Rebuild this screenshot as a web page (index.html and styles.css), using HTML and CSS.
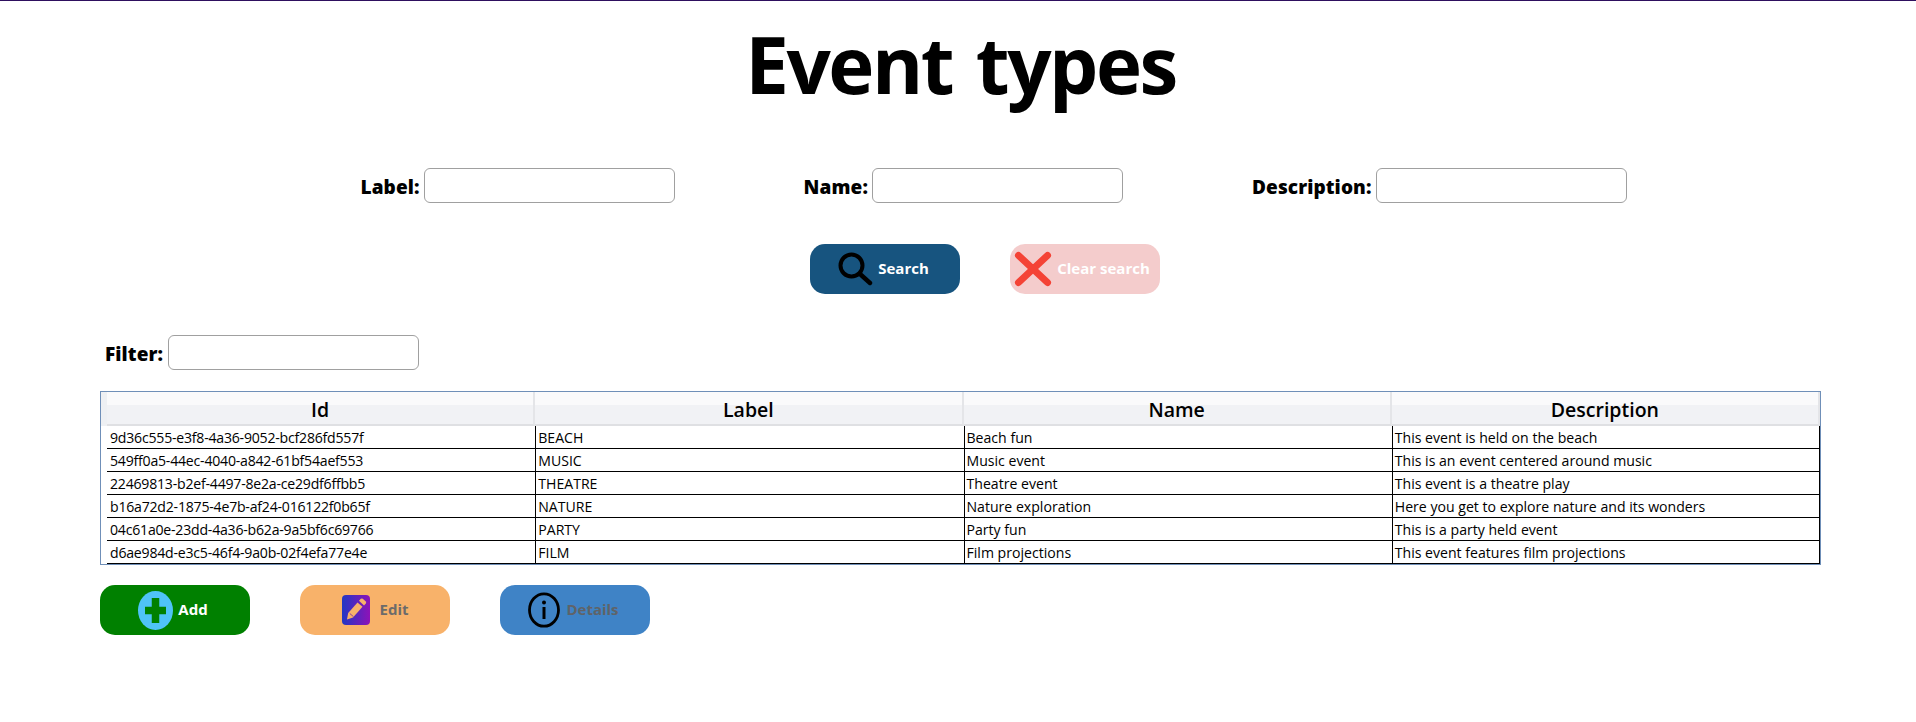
FILE: index.html
```html
<!DOCTYPE html>
<html lang="en">
<head>
    <meta charset="UTF-8">
    <meta name="viewport" content="width=device-width, initial-scale=1.0">
    <title>Event types</title>
    <link rel="stylesheet" href="styles.css">
</head>
<body>
    <h1 class="page-title">Event types</h1>

    <div class="search-row">
        <div class="field"><label for="label">Label:</label><input type="text" id="label"></div>
        <div class="field"><label for="name">Name:</label><input type="text" id="name"></div>
        <div class="field"><label for="description">Description:</label><input type="text" id="description"></div>
    </div>

    <div class="search-buttons">
        <button class="btn btn-search">
            <svg width="36" height="36" viewBox="0 0 36 36"><circle cx="14.5" cy="14.5" r="11" fill="none" stroke="#000" stroke-width="4"/><path d="M23 23l10 9" stroke="#000" stroke-width="4.4" stroke-linecap="round"/></svg>
            <span>Search</span>
        </button>
        <button class="btn btn-clear">
            <svg width="38" height="36" viewBox="0 0 38 36"><path d="M4.500 4.500L33.500 31.500M33.500 4.500L4.500 31.500" stroke="#f44336" stroke-width="7" stroke-linecap="round"/></svg>
            <span>Clear search</span>
        </button>
    </div>

    <div class="filter-row">
        <div class="field"><label for="filter">Filter:</label><input type="text" id="filter"></div>
    </div>

    <table class="grid">
        <thead>
            <tr><th>Id</th><th>Label</th><th>Name</th><th>Description</th></tr>
        </thead>
        <tbody>
            <tr><td class="uuid">9d36c555-e3f8-4a36-9052-bcf286fd557f</td><td>BEACH</td><td>Beach fun</td><td>This event is held on the beach</td></tr>
            <tr><td class="uuid">549ff0a5-44ec-4040-a842-61bf54aef553</td><td>MUSIC</td><td>Music event</td><td>This is an event centered around music</td></tr>
            <tr><td class="uuid">22469813-b2ef-4497-8e2a-ce29df6ffbb5</td><td>THEATRE</td><td>Theatre event</td><td>This event is a theatre play</td></tr>
            <tr><td class="uuid">b16a72d2-1875-4e7b-af24-016122f0b65f</td><td>NATURE</td><td>Nature exploration</td><td>Here you get to explore nature and its wonders</td></tr>
            <tr><td class="uuid">04c61a0e-23dd-4a36-b62a-9a5bf6c69766</td><td>PARTY</td><td>Party fun</td><td>This is a party held event</td></tr>
            <tr><td class="uuid">d6ae984d-e3c5-46f4-9a0b-02f4efa77e4e</td><td>FILM</td><td>Film projections</td><td>This event features film projections</td></tr>
        </tbody>
    </table>

    <div class="action-buttons">
        <button class="btn btn-add">
            <svg width="35" height="39" viewBox="0 0 35 39"><ellipse cx="17.500" cy="19.500" rx="17.500" ry="19.500" fill="#4fc3f7"/><path d="M17.500 7v25M7 19.500h21" stroke="#008000" stroke-width="7.500"/></svg>
            <span>Add</span>
        </button>
        <button class="btn btn-edit">
            <svg width="28" height="30" viewBox="0 0 28 30">
                <defs><linearGradient id="editBg" x1="0" y1="0" x2="1" y2="0"><stop offset="0" stop-color="#2238c4"/><stop offset="1" stop-color="#8e12b8"/></linearGradient></defs>
                <rect width="28" height="30" rx="4" fill="url(#editBg)"/>
                <path d="M5 24.500l1.200-6.500L15.500 7.500l5 4.300L11 22.500z" fill="#f8b26a"/>
                <path d="M17 5.800l1.800-2q1-.8 2 0l3 2.600q.8.900 0 2l-1.800 2z" fill="#f8b26a"/>
                <path d="M7.800 18.500l3.700 3.200" stroke="#8a3fa0" stroke-width="1"/>
            </svg>
            <span>Edit</span>
        </button>
        <button class="btn btn-details">
            <svg width="32" height="36" viewBox="0 0 32 36"><ellipse cx="16" cy="18" rx="14.500" ry="16.200" fill="none" stroke="#000" stroke-width="2.800"/><circle cx="16" cy="10.500" r="2" fill="#000"/><path d="M16 15v12" stroke="#000" stroke-width="3"/></svg>
            <span>Details</span>
        </button>
    </div>
</body>
</html>
```

FILE: styles.css
```css
body {
    margin: 0;
    border-top: 1px solid #2e0f5e;
    font-family: "Open Sans", "Noto Sans", sans-serif;
    color: black;
    background: white;
}
.page-title {
    margin: 0;
    padding: 9px 0 3px 5px;
    height: 108px;
    font-size: 78px;
    line-height: 108px;
    font-weight: 700;
    text-align: center;
    letter-spacing: -2.5px;
    word-spacing: 6px;
}
.search-row {
    display: flex;
    justify-content: center;
    gap: 129px;
    margin-top: 47px;
    padding-left: 71px;
}
.field {
    display: flex;
    align-items: center;
    gap: 4px;
}
.field label {
    padding-top: 2px;
    font-size: 19px;
    font-weight: 800;
    letter-spacing: 0.1px;
}
.field input {
    box-sizing: border-box;
    width: 251px;
    height: 35px;
    border: 1px solid #a0a0a0;
    border-radius: 6px;
    background: white;
}
.search-buttons {
    display: flex;
    justify-content: center;
    gap: 50px;
    margin-top: 41px;
    padding-left: 54px;
}
.btn {
    display: flex;
    align-items: center;
    justify-content: center;
    gap: 5px;
    box-sizing: border-box;
    width: 150px;
    height: 50px;
    padding: 0;
    border: none;
    border-radius: 15px;
    font-family: inherit;
    font-size: 15px;
    font-weight: 700;
}
.btn span {
    padding-bottom: 2px;
}
.btn-search {
    padding-right: 4px;
    background: #17547f;
    color: white;
}
.btn-clear {
    padding-right: 6px;
    background: #f4cccc;
    color: white;
}
.btn-add {
    padding-right: 4px;
    background: green;
    color: white;
}
.btn-edit {
    gap: 10px;
    background: #f8b26a;
    color: #6b6b6b;
}
.btn-details {
    gap: 6px;
    padding-right: 3px;
    background: #3f83c6;
    color: #5f6368;
}
.filter-row {
    margin-top: 41px;
    padding-left: 105px;
}
.filter-row .field {
    gap: 5px;
}
.grid {
    box-sizing: border-box;
    width: 1721px;
    margin: 21px 0 0 100px;
    border: 1px solid #6f8fb8;
    border-collapse: separate;
    border-spacing: 0;
    table-layout: fixed;
    padding-left: 6px;
    background: linear-gradient(#eef0f3, #eef0f3) left top / 6px 34px no-repeat;
}
.grid th {
    height: 34px;
    padding: 2px 0 0;
    box-sizing: border-box;
    font-size: 19.5px;
    font-weight: 600;
    background: linear-gradient(#fafafb 40%, #f1f2f5 40%);
    border-right: 2px solid #e4e5e8;
    border-bottom: 2px solid #dfe0e3;
}
.grid td {
    height: 23px;
    padding: 0 2px;
    box-sizing: border-box;
    font-size: 14.1px;
    line-height: 21px;
    white-space: nowrap;
    border-bottom: 1px solid black;
    border-left: 1px solid black;
}
.grid td.uuid {
    border-left: none;
    padding-left: 3px;
    letter-spacing: -0.22px;
}
.grid td:last-child {
    border-right: 1px solid black;
}
.action-buttons {
    display: flex;
    gap: 50px;
    margin-top: 20px;
    padding-left: 100px;
}
```
